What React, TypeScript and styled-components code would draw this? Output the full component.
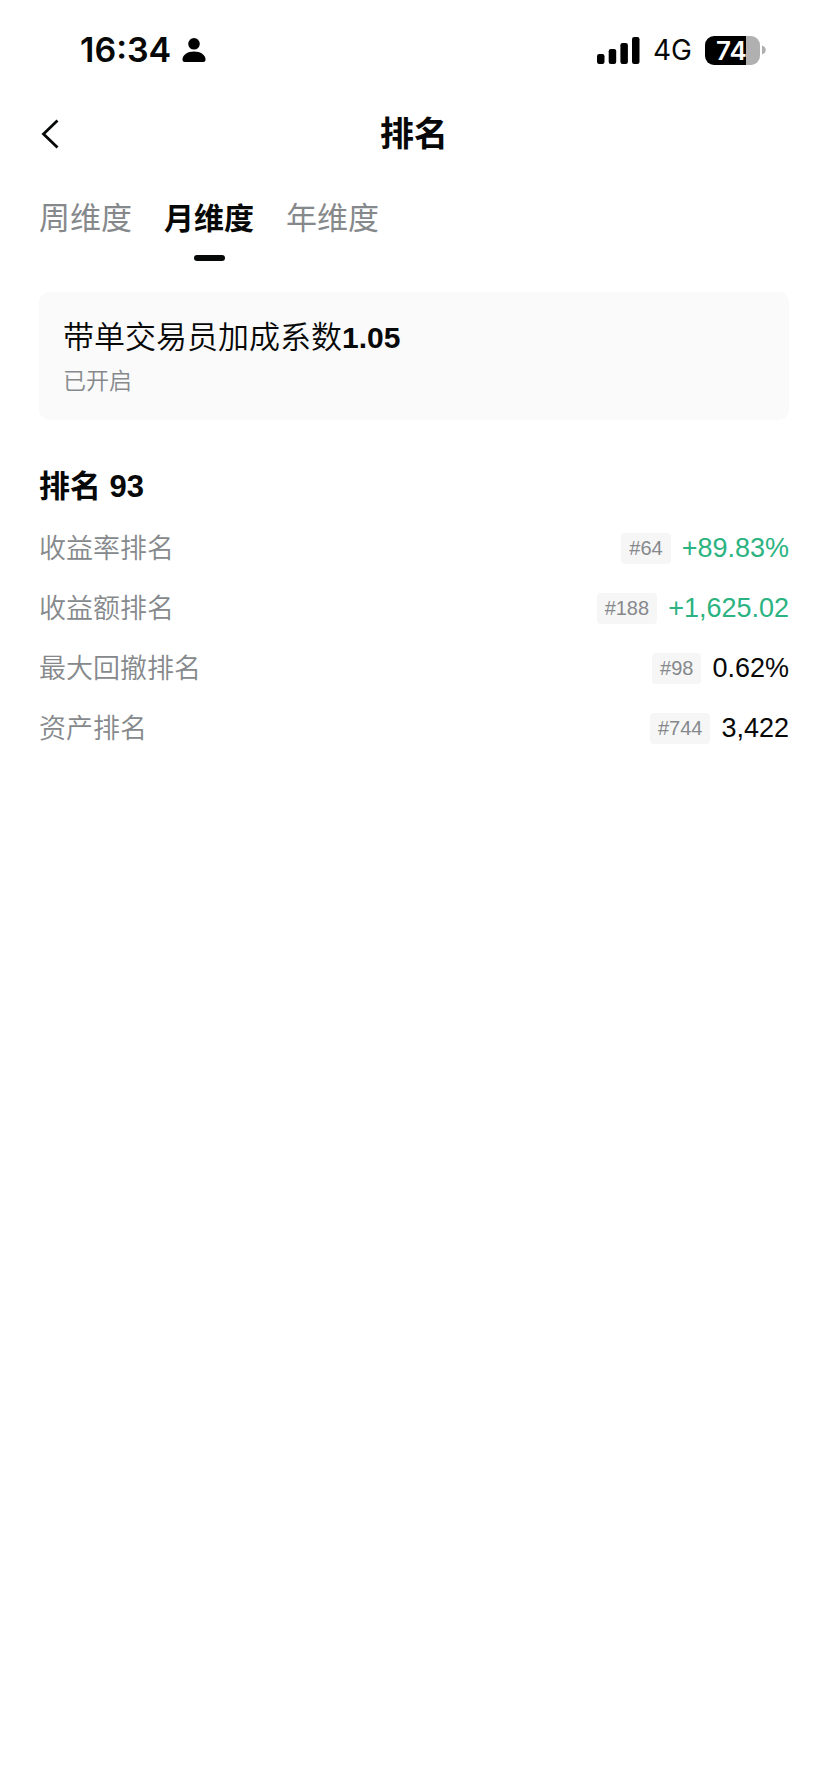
import React, { useState } from "react";
import styled, { createGlobalStyle } from "styled-components";

const GlobalStyle = createGlobalStyle`
  * { box-sizing: border-box; }
  body {
    margin: 0;
    background: #fff;
    color: #070808;
    font-family: "Liberation Sans", "Noto Sans CJK SC", sans-serif;
  }
`;

const Page = styled.div`
  display: flex;
  flex-direction: column;
  min-height: 100vh;
`;

const StatusBar = styled.div`
  display: flex;
  align-items: center;
  justify-content: space-between;
  height: 100px;
  padding: 0 62px 0 80px;
  font-family: Inter, sans-serif;
`;

const StatusGroup = styled.div<{ $gap: number }>`
  display: flex;
  align-items: center;
  gap: ${(p) => p.$gap}px;
`;

const Clock = styled.time`
  font-size: 34px;
  font-weight: 600;
  line-height: 40px;
`;

const Network = styled.span`
  font-size: 28px;
  line-height: 40px;
`;

const Battery = styled.div`
  display: flex;
  align-items: center;
  gap: 2px;
`;

const BatteryBody = styled.div`
  display: flex;
  align-items: center;
  justify-content: center;
  width: 55px;
  height: 29px;
  padding-right: 2px;
  border-radius: 9px;
  background: linear-gradient(to right, #000 41px, #b0b0b0 41px);
  color: #fff;
  font-size: 26px;
  font-weight: 600;
  line-height: 29px;
`;

const Header = styled.header`
  display: grid;
  grid-template-columns: 1fr auto 1fr;
  align-items: center;
  height: 68px;
  padding: 0 40px;
`;

const BackButton = styled.button`
  display: flex;
  justify-self: start;
  padding: 0;
  border: 0;
  background: none;
  color: inherit;
  cursor: pointer;
`;

const Title = styled.h1`
  margin: 0;
  font-size: 34px;
  font-weight: 600;
  line-height: 44px;
`;

const Tabs = styled.div`
  display: flex;
  gap: 32px;
  padding: 29px 39px 0;
`;

const Tab = styled.button<{ $active: boolean }>`
  display: flex;
  flex-direction: column;
  align-items: center;
  gap: 14px;
  padding: 0;
  border: 0;
  background: none;
  color: ${(p) => (p.$active ? "#070808" : "#86898c")};
  font: inherit;
  font-size: ${(p) => (p.$active ? 30 : 31)}px;
  font-weight: ${(p) => (p.$active ? 600 : 400)};
  line-height: 44px;
  cursor: pointer;

  &::after {
    content: "";
    width: 31px;
    height: 6px;
    border-radius: 3px;
    background: ${(p) => (p.$active ? "#070808" : "transparent")};
  }
`;

const Content = styled.main`
  padding: 31px 39px 40px;
`;

const Card = styled.section`
  display: flex;
  flex-direction: column;
  gap: 6px;
  padding: 24px;
  border-radius: 10px;
  background: #fafafa;
`;

const CardTitle = styled.p`
  margin: 0;
  font-size: 31px;
  font-weight: 350;
  line-height: 44px;

  strong { font-size: 30px; font-weight: 700; }
`;

const CardNote = styled.p`
  margin: 0;
  color: #86898c;
  font-size: 23px;
  font-weight: 350;
  line-height: 30px;
`;

const Heading = styled.h2`
  margin: 47px 0 11px;
  font-size: 31px;
  font-weight: 600;
  line-height: 40px;
`;

const Ranks = styled.dl`
  margin: 0;
`;

const Row = styled.div`
  display: flex;
  align-items: center;
  justify-content: space-between;
  height: 60px;
  font-size: 27px;
  line-height: 40px;
`;

const Label = styled.dt`
  padding-top: 2px;
  color: #86898c;
  font-weight: 350;
`;

const Result = styled.dd`
  display: flex;
  align-items: center;
  gap: 11px;
  margin: 0;
`;

const Tag = styled.span`
  padding: 0 8px;
  border-radius: 4px;
  background: #f6f6f7;
  color: #86898c;
  font-size: 20px;
  line-height: 31px;
`;

const Value = styled.span<{ $gain: boolean }>`
  color: ${(p) => (p.$gain ? "#2bb381" : "#070808")};
`;

const tabs = ["周维度", "月维度", "年维度"];

const rows = [
  { label: "收益率排名", rank: "#64", value: "+89.83%", gain: true },
  { label: "收益额排名", rank: "#188", value: "+1,625.02", gain: true },
  { label: "最大回撤排名", rank: "#98", value: "0.62%", gain: false },
  { label: "资产排名", rank: "#744", value: "3,422", gain: false },
];

export default function App() {
  const [active, setActive] = useState(1);
  return (
    <Page lang="zh-CN">
      <GlobalStyle />
      <StatusBar>
        <StatusGroup $gap={11}>
          <Clock>16:34</Clock>
          <svg width="24" height="24" viewBox="0 0 24 24" aria-hidden="true">
            <circle cx="12" cy="5.800" r="5.800" />
            <path d="M.5 21.5C.5 17 5.5 13.500 12 13.500s11.500 3.500 11.500 8c0 1.700-.8 2.500-2.300 2.500H2.800C1.300 24 .5 23.200.5 21.500Z" />
          </svg>
        </StatusGroup>
        <StatusGroup $gap={13}>
          <svg width="43" height="27" viewBox="0 0 43 27" aria-hidden="true">
            <rect x="0" y="17" width="7.500" height="10" rx="2.200" />
            <rect x="11.700" y="12" width="7.500" height="15" rx="2.200" />
            <rect x="23.400" y="6" width="7.500" height="21" rx="2.200" />
            <rect x="35" y="0" width="7.500" height="27" rx="2.200" />
          </svg>
          <Network>4G</Network>
          <Battery>
            <BatteryBody>74</BatteryBody>
            <svg width="4" height="10" viewBox="0 0 4 10" aria-hidden="true">
              <path d="M0 0.500C5 2 5 8 0 9.500Z" fill="#b0b0b0" />
            </svg>
          </Battery>
        </StatusGroup>
      </StatusBar>
      <Header>
        <BackButton type="button" aria-label="返回">
          <svg width="20" height="30" viewBox="0 0 20 30" fill="none" stroke="currentColor" strokeWidth="2.800" aria-hidden="true">
            <path d="M17.500 1.500 3.500 15l14 13.500" />
          </svg>
        </BackButton>
        <Title>排名</Title>
      </Header>
      <Tabs role="tablist">
        {tabs.map((name, i) => (
          <Tab
            key={name}
            type="button"
            role="tab"
            aria-selected={i === active}
            $active={i === active}
            onClick={() => setActive(i)}
          >
            {name}
          </Tab>
        ))}
      </Tabs>
      <Content>
        <Card>
          <CardTitle>
            带单交易员加成系数<strong>1.05</strong>
          </CardTitle>
          <CardNote>已开启</CardNote>
        </Card>
        <Heading>排名 93</Heading>
        <Ranks>
          {rows.map((row) => (
            <Row key={row.label}>
              <Label>{row.label}</Label>
              <Result>
                <Tag>{row.rank}</Tag>
                <Value $gain={row.gain}>{row.value}</Value>
              </Result>
            </Row>
          ))}
        </Ranks>
      </Content>
    </Page>
  );
}
